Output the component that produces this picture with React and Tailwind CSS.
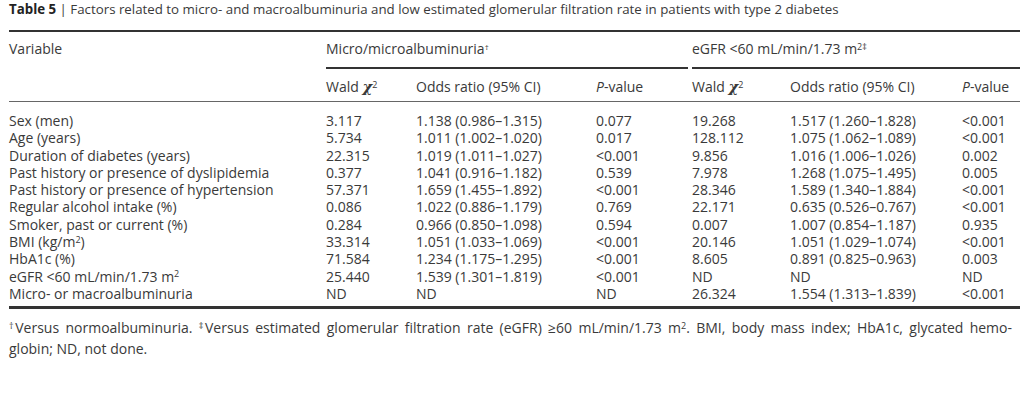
import React from 'react';

const rows = [
  ['Sex (men)', '3.117', '1.138 (0.986–1.315)', '0.077', '19.268', '1.517 (1.260–1.828)', '<0.001'],
  ['Age (years)', '5.734', '1.011 (1.002–1.020)', '0.017', '128.112', '1.075 (1.062–1.089)', '<0.001'],
  ['Duration of diabetes (years)', '22.315', '1.019 (1.011–1.027)', '<0.001', '9.856', '1.016 (1.006–1.026)', '0.002'],
  ['Past history or presence of dyslipidemia', '0.377', '1.041 (0.916–1.182)', '0.539', '7.978', '1.268 (1.075–1.495)', '0.005'],
  ['Past history or presence of hypertension', '57.371', '1.659 (1.455–1.892)', '<0.001', '28.346', '1.589 (1.340–1.884)', '<0.001'],
  ['Regular alcohol intake (%)', '0.086', '1.022 (0.886–1.179)', '0.769', '22.171', '0.635 (0.526–0.767)', '<0.001'],
  ['Smoker, past or current (%)', '0.284', '0.966 (0.850–1.098)', '0.594', '0.007', '1.007 (0.854–1.187)', '0.935'],
  [<>BMI (kg/m<sup className="text-[9px]">2</sup>)</>, '33.314', '1.051 (1.033–1.069)', '<0.001', '20.146', '1.051 (1.029–1.074)', '<0.001'],
  ['HbA1c (%)', '71.584', '1.234 (1.175–1.295)', '<0.001', '8.605', '0.891 (0.825–0.963)', '0.003'],
  [<>eGFR &lt;60 mL/min/1.73 m<sup className="text-[9px]">2</sup></>, '25.440', '1.539 (1.301–1.819)', '<0.001', 'ND', 'ND', 'ND'],
  ['Micro- or macroalbuminuria', 'ND', 'ND', 'ND', '26.324', '1.554 (1.313–1.839)', '<0.001'],
];

const cols = 'grid grid-cols-[317px_90px_180px_96px_98px_172px_1fr]';

function Wald(){
  return <>Wald <span className="font-['DejaVu_Serif'] italic font-bold text-[15px]">χ</span><sup className="text-[9px]">2</sup></>;
}

export default function App(){
  return (
    <div className="w-[1024px] h-[415px] bg-white text-[#3a3a3a] text-[14px] font-['Open_Sans',sans-serif] px-[9px]">
      <div className="leading-[19px] text-[13.3px]">
        <b className="font-bold text-[#222]">Table 5</b> | Factors related to micro- and macroalbuminuria and low estimated glomerular filtration rate in patients with type 2 diabetes
      </div>
      <div className="mt-[11px] border-t-[2px] border-[#333] w-[1011px]">
        <div className={cols + ' leading-[19px] pt-[7px]'}>
          <div>Variable</div>
          <div className="col-span-3 pr-[4px]">
            <div>Micro/microalbuminuria<sup className="text-[8px]">†</sup></div>
            <div className="mt-[9px] border-t-[2px] border-[#333]"></div>
          </div>
          <div className="col-span-3">
            <div>eGFR &lt;60 mL/min/1.73 m<sup className="text-[9px]">2‡</sup></div>
            <div className="mt-[9px] border-t-[2px] border-[#333]"></div>
          </div>
        </div>
        <div className={cols + ' leading-[19px] pt-[8px] pb-[4px] border-b border-[#666]'}>
          <div></div>
          <div><Wald /></div>
          <div>Odds ratio (95% CI)</div>
          <div><i>P</i>-value</div>
          <div><Wald /></div>
          <div>Odds ratio (95% CI)</div>
          <div><i>P</i>-value</div>
        </div>
        <div className="pt-[10px] pb-[4px] border-b-[3px] border-[#333]">
          {rows.map((r, i) => (
            <div key={i} className={cols + ' leading-[17.3px]'}>
              {r.map((c, j) => <div key={j} className="whitespace-nowrap">{c}</div>)}
            </div>
          ))}
        </div>
      </div>
      <div className="mt-[8px] leading-[21px] w-[1003px]">
        <div className="text-justify [text-align-last:justify]">
          <sup className="text-[9px] mr-[-1px]">†</sup>Versus normoalbuminuria. <sup className="text-[9px] mr-[-1px]">‡</sup>Versus estimated glomerular filtration rate (eGFR) ≥60 mL/min/1.73 m<sup className="text-[9px]">2</sup>. BMI, body mass index; HbA1c, glycated hemo-
        </div>
        <div>globin; ND, not done.</div>
      </div>
    </div>
  );
}
